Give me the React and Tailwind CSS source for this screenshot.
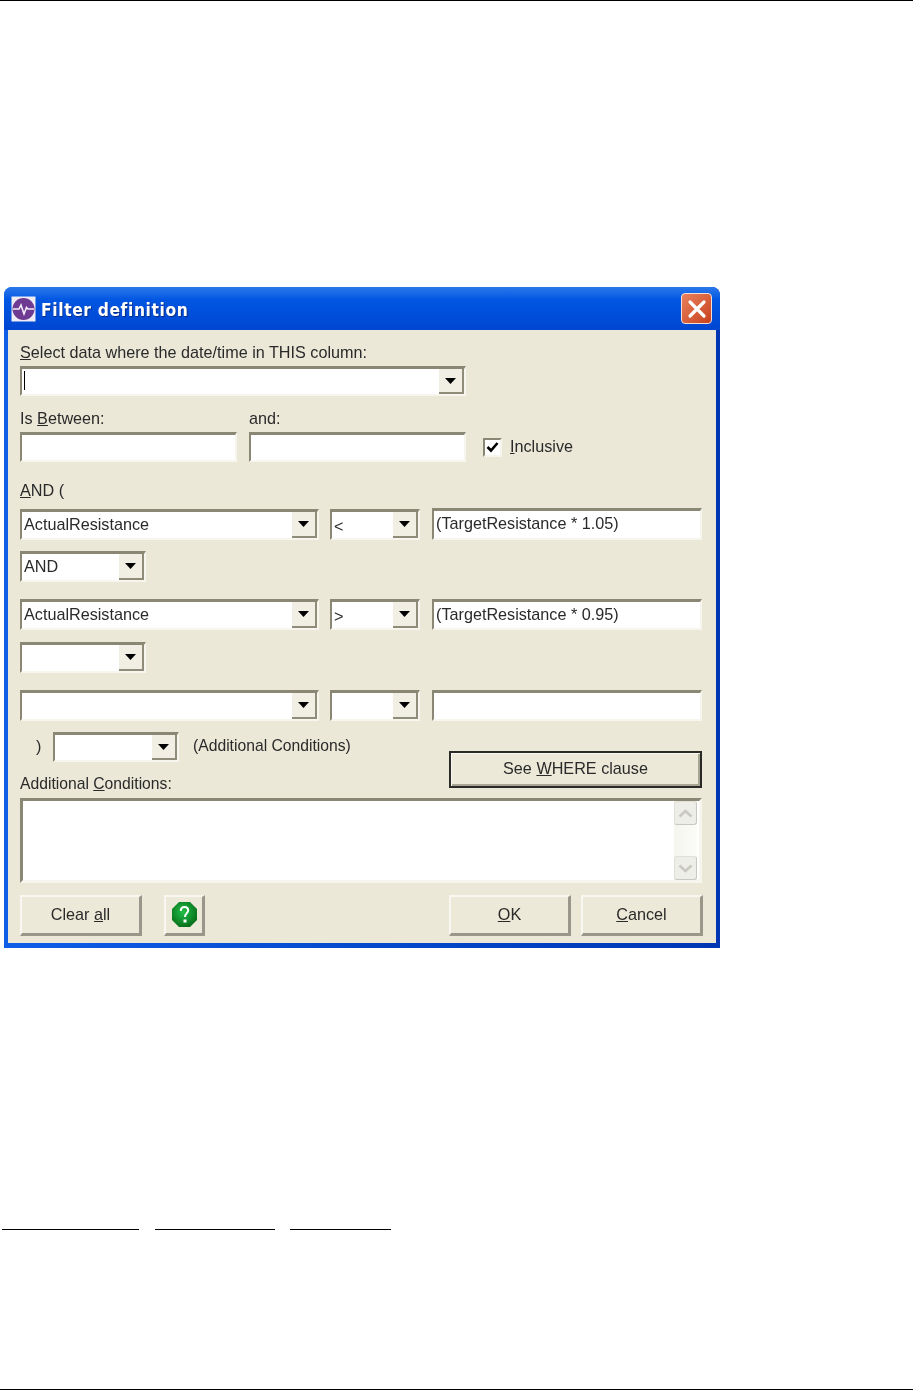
import React from "react";

function Arrow() {
  return (
    <svg width="11" height="6" viewBox="0 0 11 6">
      <path d="M0 0H11L5.5 6Z" fill="#000" />
    </svg>
  );
}

// Sunken win32 style edit box
function Field({ className = "", children }) {
  return (
    <div
      className={`flex items-center bg-white border-t-[3px] border-l-[2px] border-b-[2px] border-r-[2px] border-t-[#8a8775] border-l-[#8a8775] border-b-[#f6f5ee] border-r-[#f6f5ee] pl-[2px] pb-[3px] overflow-hidden whitespace-nowrap ${className}`}
    >
      {children}
    </div>
  );
}

function Combo({ className = "", children }) {
  return (
    <div
      className={`flex items-center bg-white border-t-[3px] border-l-[2px] border-b-[2px] border-r-[2px] border-t-[#8a8775] border-l-[#8a8775] border-b-[#f6f5ee] border-r-[#f6f5ee] pl-[2px] ${className}`}
    >
      <div className="flex-1 min-w-0 whitespace-nowrap pb-[2px]">{children}</div>
      <div className="flex items-center justify-center w-[25px] h-full bg-[#f1efe4] border-r-[2px] border-b-[2px] border-r-[#8f8c7a] border-b-[#8f8c7a]">
        <Arrow />
      </div>
    </div>
  );
}

function Button({ className = "", children }) {
  return (
    <div
      className={`flex items-center justify-center h-[41px] pb-[2px] bg-[#ece9d8] border-t-[2px] border-l-[2px] border-b-[3px] border-r-[3px] border-t-[#f8f7f1] border-l-[#f8f7f1] border-b-[#99968a] border-r-[#99968a] ${className}`}
    >
      {children}
    </div>
  );
}

function ScrollButton({ up }) {
  return (
    <div className="flex items-center justify-center h-[24px] bg-[#eeeee8] rounded-[3px] border border-[#e0e0d8] border-b-[#c8c8c0] border-r-[#c8c8c0]">
      <svg width="15" height="9" viewBox="0 0 15 9">
        <path
          d={up ? "M1.5 7.5L7.5 2L13.5 7.5" : "M1.5 1.5L7.5 7L13.5 1.5"}
          fill="none"
          stroke="#c9c9c0"
          strokeWidth="2.6"
        />
      </svg>
    </div>
  );
}

function App() {
  return (
    <div className="relative h-[1391px] w-[913px] bg-white overflow-hidden flex flex-col border-t border-black border-b border-b-white font-['Liberation_Sans',sans-serif] text-[16.2px] leading-[20px] text-[#2a2a2a]">
      {/* dialog */}
      <div className="ml-[4px] mt-[286px] w-[716px] rounded-t-[8px] flex flex-col bg-gradient-to-r from-[#0f5ee8] to-[#0036b4] blur-[0.45px]">
        <div className="h-[43px] flex items-center pl-[7px] pr-[8px] rounded-t-[8px] bg-gradient-to-b from-[#2a78ec] via-[#0056e2] via-30% to-[#0046d2]">
          <svg width="25" height="26" viewBox="0 0 25 26" className="shrink-0">
            <rect x="0.5" y="0.5" width="24" height="25" fill="#efecf4" />
            <circle cx="12.5" cy="13" r="11" fill="#6f3a92" />
            <path d="M2 13H8L10 9L13 18L15.5 11.5L17 13H23" fill="none" stroke="#f4eef8" strokeWidth="1.6" />
          </svg>
          <span className="ml-[5px] mt-[3px] text-white font-bold text-[18px] tracking-[0.7px] font-['DejaVu_Sans',sans-serif] [text-shadow:1px_1px_1px_#0a2a80] scale-x-[0.865] origin-left">
            Filter definition
          </span>
          <div className="ml-auto w-[31px] h-[31px] rounded-[4px] border border-[#f4ddd4] bg-gradient-to-br from-[#e8815c] to-[#c8401a] flex items-center justify-center">
            <svg width="20" height="20" viewBox="0 0 20 20">
              <path d="M3 3L17 17M17 3L3 17" stroke="#fff" strokeWidth="3.2" strokeLinecap="round" />
            </svg>
          </div>
        </div>

        <div className="mx-[4px] mb-[5px] bg-[#ebe8d8] pl-[12px] pr-[13px] pt-[12px] pb-[7px] flex flex-col">
          <div className="h-[20px]">
            <span className="underline">S</span>elect data where the date/time in THIS column:
          </div>
          <Combo className="mt-[4px] w-[446px] h-[30px]">
            <div className="w-px h-[19px] bg-black" />
          </Combo>

          <div className="mt-[12px] flex h-[20px]">
            <div className="w-[229px]">
              Is <span className="underline">B</span>etween:
            </div>
            <div>and:</div>
          </div>
          <div className="mt-[4px] flex items-center">
            <Field className="w-[217px] h-[30px]" />
            <Field className="ml-[12px] w-[217px] h-[30px]" />
            <div className="ml-[17px] w-[19px] h-[19px] bg-white border-[2px] border-t-[#8a8775] border-l-[#8a8775] border-b-[#f6f5ee] border-r-[#f6f5ee] flex items-center justify-center">
              <svg width="13" height="12" viewBox="0 0 13 12">
                <path d="M1.5 6L5 9.5L11.5 2" fill="none" stroke="#000" strokeWidth="2.6" />
              </svg>
            </div>
            <div className="ml-[8px] pb-[2px]">
              <span className="underline">I</span>nclusive
            </div>
          </div>

          <div className="mt-[18px] h-[20px]">
            <span className="underline">A</span>ND (
          </div>

          <div className="mt-[8px] flex items-end">
            <Combo className="w-[299px] h-[31px]">ActualResistance</Combo>
            <Combo className="ml-[11px] w-[90px] h-[31px]">
              <span className="block pt-[3px]">&lt;</span>
            </Combo>
            <Field className="ml-[12px] w-[270px] h-[32px]">(TargetResistance * 1.05)</Field>
          </div>
          <Combo className="mt-[11px] w-[126px] h-[31px]">AND</Combo>

          <div className="mt-[17px] flex">
            <Combo className="w-[299px] h-[31px]">ActualResistance</Combo>
            <Combo className="ml-[11px] w-[90px] h-[31px]">
              <span className="block pt-[3px]">&gt;</span>
            </Combo>
            <Field className="ml-[12px] w-[270px] h-[31px]">(TargetResistance * 0.95)</Field>
          </div>
          <Combo className="mt-[12px] w-[126px] h-[31px]" />

          <div className="mt-[17px] flex">
            <Combo className="w-[299px] h-[31px]" />
            <Combo className="ml-[11px] w-[90px] h-[31px]" />
            <Field className="ml-[12px] w-[270px] h-[31px]" />
          </div>

          <div className="mt-[11px] flex justify-between">
            <div className="flex flex-col">
              <div className="flex items-center h-[30px]">
                <span className="ml-[16px] w-[17px] pb-[2px]">)</span>
                <Combo className="w-[126px] h-[30px]" />
                <span className="ml-[14px] pb-[2px] text-[15.7px]">(Additional Conditions)</span>
              </div>
              <div className="mt-[12px] h-[20px] text-[15.7px]">
                Additional <span className="underline">C</span>onditions:
              </div>
            </div>
            <div className="mt-[19px] mr-[1px] w-[253px] h-[37px] pb-[3px] flex items-center justify-center bg-[#ece9d8] border-[2px] border-[#2a2a26] shadow-[inset_1px_1px_0_#f8f7f1,inset_-2px_-2px_0_#a8a594]">
              See&nbsp;<span className="underline">W</span>HERE clause
            </div>
          </div>

          <div className="mt-[4px] w-[682px] h-[85px] bg-white border-t-[3px] border-l-[3px] border-b-[3px] border-r-[3px] border-t-[#8a8775] border-l-[#8a8775] border-b-[#f6f5ee] border-r-[#f6f5ee] flex justify-end pr-[2px]">
            <div className="w-[23px] h-full flex flex-col justify-between bg-gradient-to-r from-[#f6f6f0] to-[#fbfbf8]">
              <ScrollButton up />
              <ScrollButton />
            </div>
          </div>

          <div className="mt-[12px] flex">
            <Button className="w-[122px]">
              <span>
                Clear <span className="underline">a</span>ll
              </span>
            </Button>
            <Button className="ml-[22px] w-[41px]">
              <svg width="25" height="25" viewBox="0 0 25 25" className="shrink-0">
                <defs>
                  <radialGradient id="helpGreen" cx="0.45" cy="0.4" r="0.65">
                    <stop offset="0" stopColor="#22c048" />
                    <stop offset="1" stopColor="#056a18" />
                  </radialGradient>
                </defs>
                <path d="M7 0H18L25 7V18L18 25H7L0 18V7Z" fill="url(#helpGreen)" />
                <path
                  d="M8.8 9C8.8 6.5 10.2 5 12.5 5C14.8 5 16.2 6.5 16.2 8.5C16.2 11 13 11.5 13 15"
                  fill="none"
                  stroke="#fff"
                  strokeWidth="2"
                />
                <rect x="11.5" y="17.5" width="3" height="3" fill="#fff" />
              </svg>
            </Button>
            <Button className="ml-[244px] w-[122px]">
              <span>
                <span className="underline">O</span>K
              </span>
            </Button>
            <Button className="ml-[10px] w-[122px]">
              <span>
                <span className="underline">C</span>ancel
              </span>
            </Button>
          </div>
        </div>
      </div>

      {/* footnote rules */}
      <div className="mt-[281px] ml-[2px] flex">
        <div className="w-[137px] h-px bg-black" />
        <div className="ml-[16px] w-[120px] h-px bg-black" />
        <div className="ml-[15px] w-[101px] h-px bg-black" />
      </div>

      <div className="mt-auto h-px bg-black" />
    </div>
  );
}

export default App;
